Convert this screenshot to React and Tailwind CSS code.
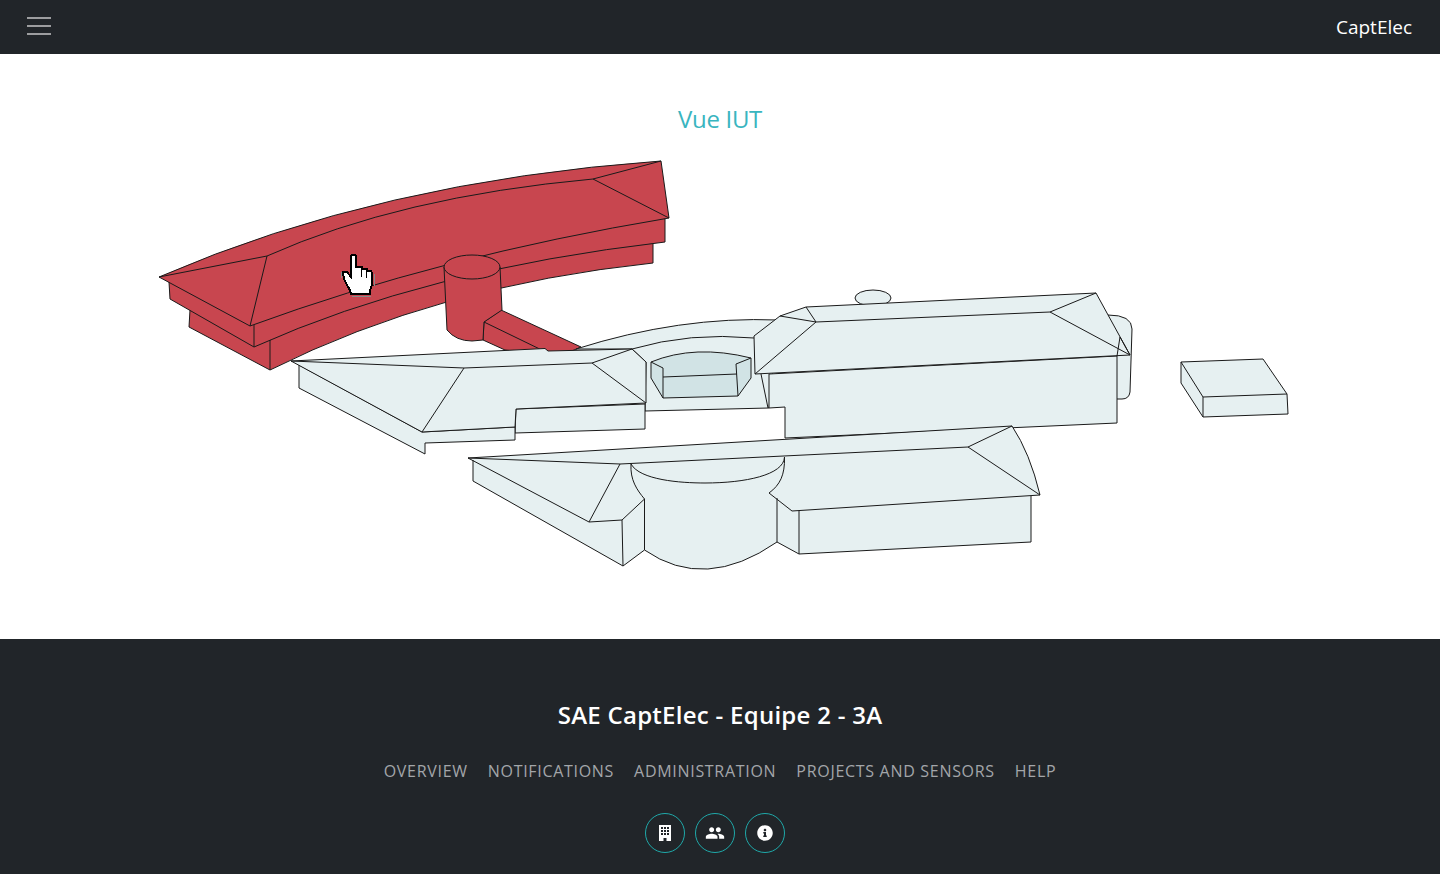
import React from 'react';
import { FaInfoCircle } from 'react-icons/fa';
import { MdPeople } from 'react-icons/md';

const RED = '#c8464f';
const LIGHT = '#e6f0f1';
const COURT = '#d1e3e5';

const links = ['Overview', 'Notifications', 'Administration', 'Projects and sensors', 'Help'];

const RedWing = () => (
  <g fill={RED} stroke="#1a1a1a" strokeWidth="1" strokeLinejoin="round">
    {/* lower level */}
    <path d="M190 310 L189 327 L270 370 Q438.5 285.5 653 263 L653 243 L400 260 Z" />
    <path d="M270 339 L270 370" fill="none" />
    {/* middle level */}
    <path d="M169 282 L170 299 L254 347 Q426.5 269.5 665 242 L665 218 L400 240 Z" />
    <path d="M254 325 L254 347" fill="none" />
    {/* roof */}
    <path d="M159 277 Q380 181 661 161 L669 218 Q440.5 256 250 326 Z" />
    <path d="M159 277 L267 256 Q400 196.5 593 179 L661 161 M593 179 L669 218 M267 256 L250 326" fill="none" />
    {/* corridor */}
    <path d="M501 310 L581 347 L560 356 L505 350 L483 340 L484 322 Z" />
    <path d="M484 322 L550 354" fill="none" />
    {/* stair tower */}
    <path d="M444 267 L447 330 Q456 341 472 341 L483 340 L484 322 L502 310 L500 267 Z" />
    <ellipse cx="472" cy="267" rx="28" ry="12" />
  </g>
);

const LeftWing = () => (
  <g fill={LIGHT} stroke="#1a1a1a" strokeWidth="1" strokeLinejoin="round">
    {/* courtyard ground */}
    <path d="M576 349 Q680 316 778 320 L769 408 L645 411 L646 362 L632 349 Z" />
    <path d="M632 349 Q690 332 754 338" fill="none" />
    {/* walls */}
    <path d="M516 409 L645 404 L645 429 L515 433 Z" />
    <path d="M299 365 L299 388 L425 454 L425 443 L515 440 L515 427 L422 432 Z" />
    {/* roof */}
    <path d="M291 361 L545 348.5 L548 351 L632 349 L646 362 L646 403 L516 409 L515 427 L422 432 Z" />
    <path d="M291 361 L464 368 L592 363 L632 349 M592 363 L646 403 M464 368 L422 432" fill="none" />
    {/* inner court */}
    <g fill={COURT}>
      <path d="M651 362 Q695 344 751 358 L751 378 L738 396 L663 398 L651 378 Z" />
      <path d="M651 362 L663 368 L663 398 M751 358 L736 364 L738 396 M663 377 L737 374" fill="none" />
    </g>
  </g>
);

const MainBuilding = () => (
  <g fill={LIGHT} stroke="#1a1a1a" strokeWidth="1" strokeLinejoin="round">
    <ellipse cx="873" cy="298" rx="18" ry="8" />
    <path d="M1108 315 Q1132 315 1132 329 L1130 392 Q1129 399 1122 399 L1110 399 Z" />
    <path d="M769 374 L769 408 L785 407 L785 438 L1117 423 L1117 356 Z" />
    <path d="M761 374 L768 408" fill="none" />
    <path d="M754 336 L780 316 L806 307 L1096 293 L1130 355 L755 374 Z" />
    <path d="M780 316 L816 322 L1050 312 L1096 293 M806 307 L816 322 L755 374 M1050 312 L1130 355" fill="none" />
    <path d="M1120 337 L1117 356 M1120 337 L1130 355" fill="none" />
  </g>
);

const SmallBlock = () => (
  <g fill={LIGHT} stroke="#1a1a1a" strokeWidth="1" strokeLinejoin="round">
    <path d="M1181 362 L1263 359 L1287 394 L1288 414 L1203 417 L1181 383 Z" />
    <path d="M1181 362 L1203 397 L1287 394 M1203 397 L1203 417" fill="none" />
  </g>
);

const FrontBuilding = () => (
  <g stroke="#1a1a1a" strokeWidth="1" strokeLinejoin="round" fill="none">
    {/* flat fill first, outlines go on top */}
    <path
      fill={LIGHT}
      stroke="none"
      d="M468 458 L1012 426 Q1030 453 1040 495 L1031 496 L1031 542 L799 554 L777 542 Q705 592 644.5 550 L623 566 L473 481 L473 460 Z"
    />
    <path d="M473 460 L473 481 L623 566 L644.5 550 Q705 592 777 542 L799 554 L1031 542 L1031 496" />
    <path d="M622 520 L623 566 M644.5 499 L644.5 550 M777 498 L777 542 M799 511 L799 554" />
    <path d="M468 458 L1012 426 Q1030 453 1040 495 L792 511 L769 493 C780 485 785 475 784.5 457" />
    <path d="M468 458 L589 522 L622 520 L644.5 499 C637 490 630 480 631 464" />
    <path d="M631 464 C640 480 680 483 705 483 C745 483 784 475 784.5 457" />
    <path d="M468 458 L620 464 L968 447 L1012 426 M968 447 L1040 495 M620 464 L589 522" />
  </g>
);

// pointer cursor sitting on the hovered wing
const Cursor = () => (
  <g strokeLinejoin="miter" shapeRendering="crispEdges">
    <path
      fill="#fff"
      stroke="#000"
      strokeWidth="2"
      d="M351 256 L352 255 L355 255 L356 256 L356 267 L362 267 L363 269 L367 269 L368 271 L371 271 L372 273 L372 285 L370 290 L370 294 L351 294 L350 290 L348 287 L344 279 L343 272 L347 272 L351 277 Z"
    />
    <path stroke="#000" strokeWidth="1" fill="none" d="M361 268 L361 277 M366 270 L366 278" />
    <path stroke="#8a8a8a" strokeWidth="1" fill="none" d="M341 272 L341 278 M374 274 L374 286 M371 296 L352 296" />
  </g>
);

const Plan = () => (
  <svg viewBox="145 150 1150 430" width="1150" height="430" className="block shrink-0">
    <RedWing />
    <LeftWing />
    <MainBuilding />
    <SmallBlock />
    <FrontBuilding />
    <Cursor />
  </svg>
);

const BuildingIcon = () => (
  <svg viewBox="0 0 12 16" width="12" height="16" fill="#fff" fillRule="evenodd">
    <path d="M0 0H12V16H7.5V13H4.5V16H0Z M2 2V4H4V2Z M5 2V4H7V2Z M8 2V4H10V2Z M2 5V7H4V5Z M5 5V7H7V5Z M8 5V7H10V5Z M2 8V10H4V8Z M5 8V10H7V8Z M8 8V10H10V8Z" />
  </svg>
);

const RoundIcon = ({ children }) => (
  <a className="flex h-10 w-10 items-center justify-center rounded-full border border-[#1fa9a9] text-white">
    {children}
  </a>
);

export default function App() {
  return (
    <div className="min-h-[874px] w-[1440px] bg-white font-['Open_Sans','Noto_Sans',sans-serif]">
      <header className="flex h-[54px] items-center justify-between bg-[#212529] pl-[27px] pr-7">
        <div className="flex w-6 flex-col gap-1.5 pb-0.5">
          <span className="block h-0.5 bg-[#9c9d9f]"></span>
          <span className="block h-0.5 bg-[#9c9d9f]"></span>
          <span className="block h-0.5 bg-[#9c9d9f]"></span>
        </div>
        <span className="text-[19px] text-white">CaptElec</span>
      </header>

      <main className="flex h-[585px] flex-col items-center pt-[48px]">
        <h2 className="mb-[14px] text-2xl leading-[34px] font-medium tracking-[-0.3px] text-[#39b5bf]">Vue IUT</h2>
        <Plan />
      </main>

      <footer className="flex h-[235px] flex-col items-center bg-[#212529] pt-[59px]">
        <h3 className="text-2xl leading-[34px] font-semibold tracking-[0.27px] text-white">SAE CaptElec - Equipe 2 - 3A</h3>
        <nav className="mt-[27px] flex gap-5 text-base leading-[24px] tracking-[0.7px] text-[#a3a6a9] uppercase">
          {links.map((l) => (
            <a key={l}>{l}</a>
          ))}
        </nav>
        <div className="mt-[30px] flex gap-2.5 pr-2.5">
          <RoundIcon><BuildingIcon /></RoundIcon>
          <RoundIcon><MdPeople size={20} /></RoundIcon>
          <RoundIcon><FaInfoCircle size={16} /></RoundIcon>
        </div>
      </footer>
    </div>
  );
}
